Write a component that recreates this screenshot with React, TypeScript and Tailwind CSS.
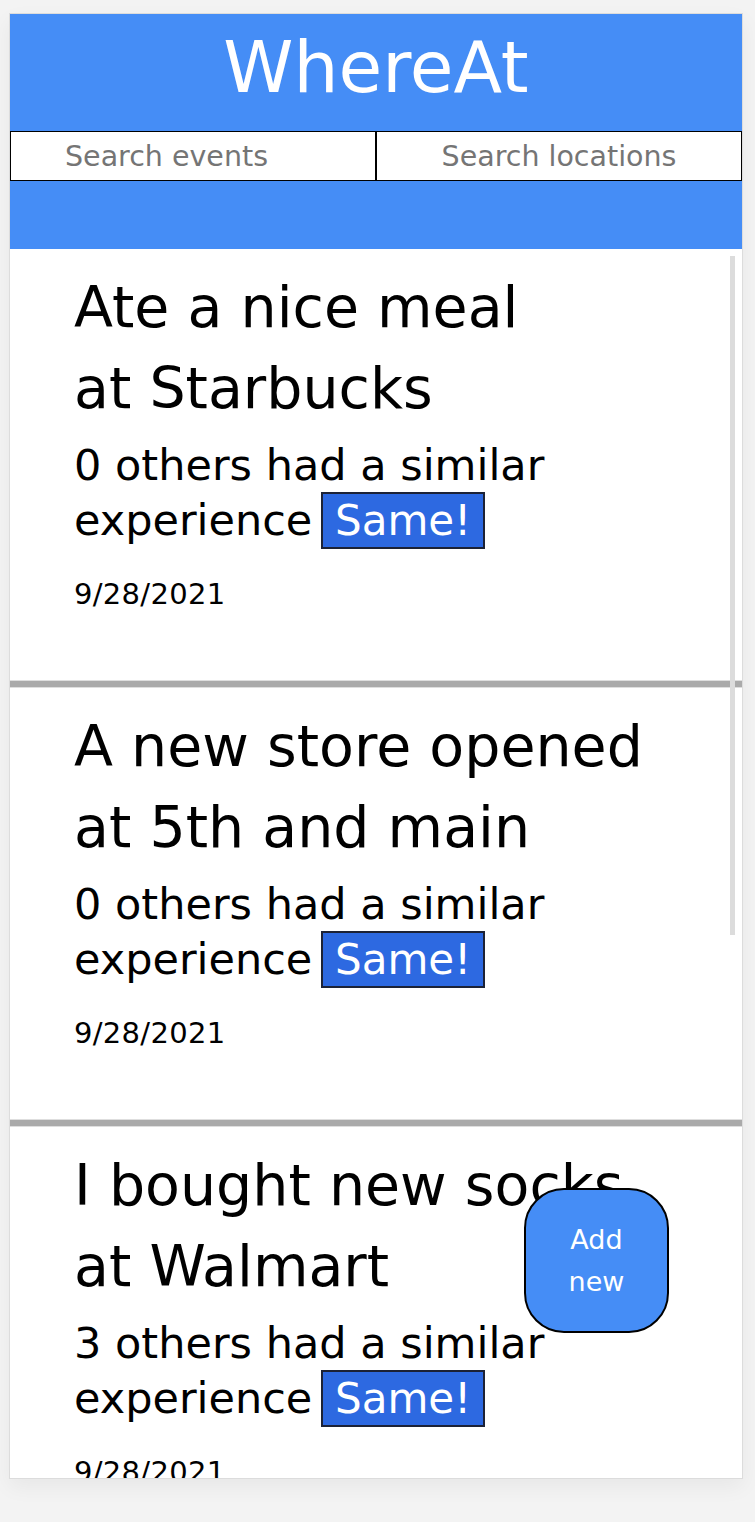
import React from "react";

const events = [
  { what: "Ate a nice meal", where: "Starbucks", count: 0, date: "9/28/2021" },
  { what: "A new store opened", where: "5th and main", count: 0, date: "9/28/2021" },
  { what: "I bought new socks", where: "Walmart", count: 3, date: "9/28/2021" },
];

function Card({ e }: { e: (typeof events)[number] }) {
  return (
    <div className="pl-[64px] pr-[10px] pt-[18px] pb-[69px] bg-white">
      <div className="text-[57px] leading-[81px] text-black">
        {e.what}
        <br />
        at {e.where}
      </div>
      <div className="mt-[9px] text-[43px] leading-[54px] text-black">
        {e.count} others had a similar experience{" "}
        <button className="inline-block align-baseline ml-[-5px] border-2 border-[#1c2236] bg-[#2d69e1] text-white text-[42px] leading-[49px] px-[12px] py-[2px]">
          Same!
        </button>
      </div>
      <div className="mt-[29px] text-[29px] leading-[33px] text-black tracking-[0.3px]">{e.date}</div>
    </div>
  );
}

export default function App() {
  return (
    <div
      className="h-[1522px] bg-[#f3f3f3] pt-[13px] overflow-hidden"
      style={{ fontFamily: '"DejaVu Sans", Verdana, sans-serif' }}
    >
      <div className="relative ml-[9px] w-[734px] h-[1466px] border border-[#dcdcdc] bg-white shadow-[0_8px_20px_rgba(0,0,0,0.05)] flex flex-col overflow-hidden">
        <div className="h-[117px] bg-[#458df6] text-white text-[71px] leading-[81px] pt-[13px] text-center">
          WhereAt
        </div>
        <div className="flex h-[50px] bg-white">
          <input
            className="w-1/2 h-full border border-black pl-[54px] text-[28.5px] text-[#222] placeholder:text-[#757575] outline-none bg-white"
            placeholder="Search events"
          />
          <input
            className="w-1/2 h-full border border-black text-center text-[28.5px] text-[#222] placeholder:text-[#757575] outline-none bg-white"
            placeholder="Search locations"
          />
        </div>
        <div className="h-[68px] bg-[#458df6]" />
        <div className="relative flex-1 overflow-hidden">
          {events.map((e, i) => (
            <React.Fragment key={i}>
              {i > 0 && <div className="h-[8px] bg-[#aaaaaa] border-y border-[#dedede]" />}
              <Card e={e} />
            </React.Fragment>
          ))}
          <div className="absolute right-[7px] top-[7px] w-[5px] h-[679px] bg-[#dcdcdc]" />
        </div>
        <button className="absolute right-[73px] bottom-[145px] w-[145px] h-[145px] rounded-[40px] border-2 border-black bg-[#458df6] text-white text-[27px] leading-[42px] px-[20px]">
          Add new
        </button>
      </div>
    </div>
  );
}
